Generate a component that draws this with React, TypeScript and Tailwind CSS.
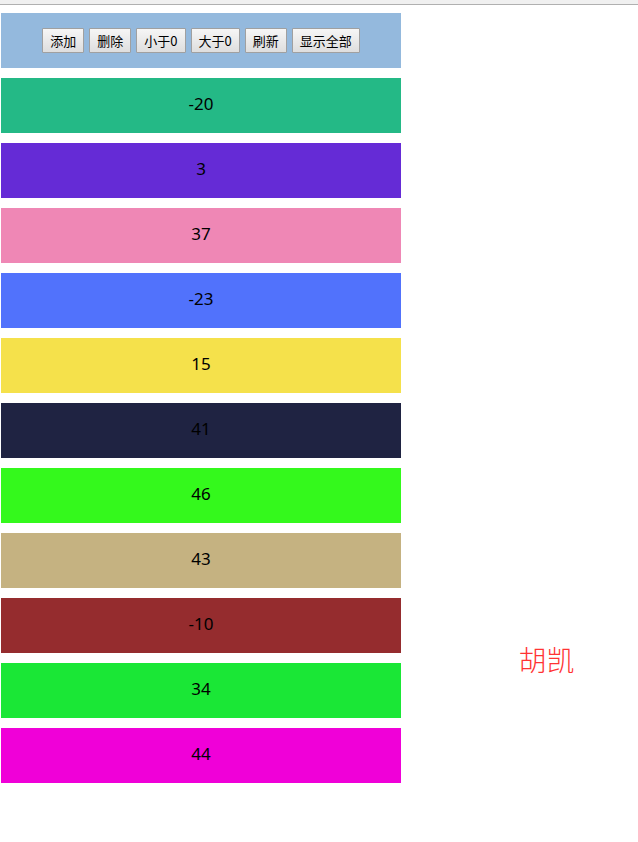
import React from "react";

const actions = ["添加", "删除", "小于0", "大于0", "刷新", "显示全部"];

const rows = [
  { value: -20, color: "bg-[#24b986]" },
  { value: 3, color: "bg-[#652bd6]" },
  { value: 37, color: "bg-[#ef87b5]" },
  { value: -23, color: "bg-[#5172fc]" },
  { value: 15, color: "bg-[#f5e14b]" },
  { value: 41, color: "bg-[#1f2342]" },
  { value: 46, color: "bg-[#34f91c]" },
  { value: 43, color: "bg-[#c5b281]" },
  { value: -10, color: "bg-[#952c2e]" },
  { value: 34, color: "bg-[#1ae736]" },
  { value: 44, color: "bg-[#f000d8]" },
];

export default function App() {
  return (
    <div className="min-h-screen bg-white font-['Noto_Sans','Noto_Sans_CJK_SC',sans-serif] text-black">
      <div className="h-[5px] border-b border-[#b0b0b0] bg-[#f0f0f0]" />
      <div className="flex pt-2 pl-px">
        <main className="flex w-full max-w-[400px] shrink-0 flex-col gap-2.5">
          <div className="flex h-[55px] items-center justify-center gap-[5px] bg-[#94b9dd]">
            {actions.map((label) => (
              <button
                key={label}
                type="button"
                className="h-[25px] rounded-[1px] border border-[#a0a0a0] bg-linear-to-b from-[#f6f6f6] to-[#dedede] px-[7px] font-['Noto_Sans_CJK_SC',sans-serif] text-[13px] leading-[23px] font-normal whitespace-nowrap"
              >
                {label}
              </button>
            ))}
          </div>
          <ul className="flex flex-col gap-2.5">
            {rows.map((row) => (
              <li
                key={row.value}
                className={`h-[55px] text-center text-[17px] leading-[52px] ${row.color}`}
              >
                {row.value}
              </li>
            ))}
          </ul>
        </main>
        <aside className="mb-[104px] flex grow items-end justify-center pl-[54px]">
          <p className="font-['Noto_Sans_CJK_SC',sans-serif] text-[28px] leading-10 font-light whitespace-nowrap text-[#ff3333]">
            胡凯
          </p>
        </aside>
      </div>
    </div>
  );
}
